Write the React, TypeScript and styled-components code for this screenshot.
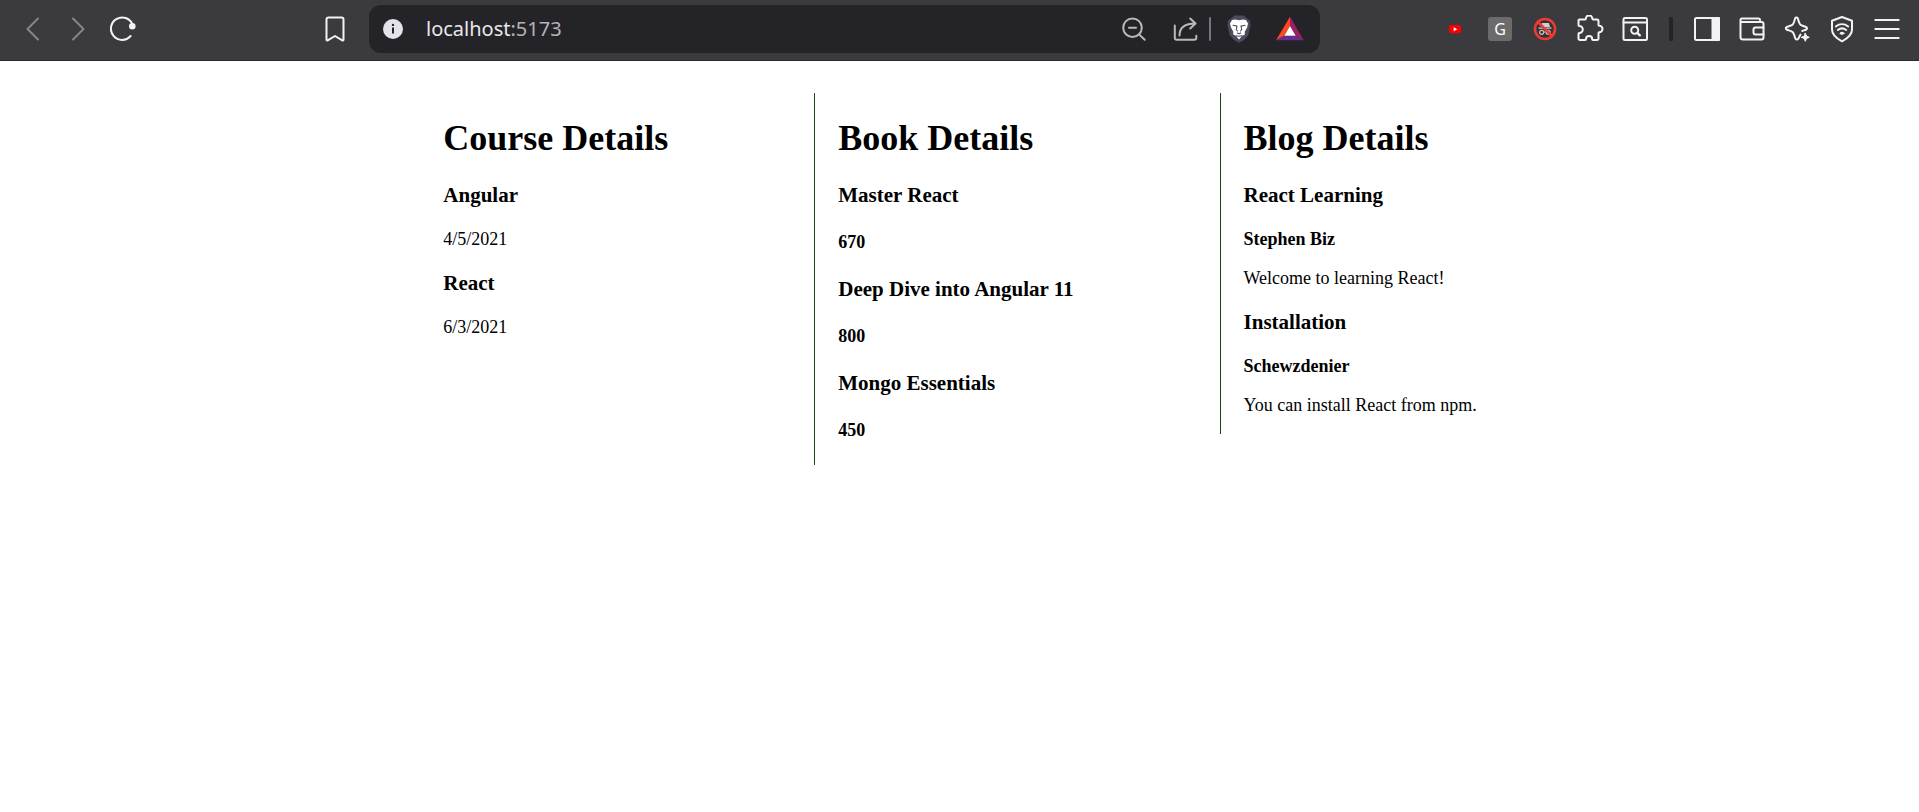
import React from "react";
import styled, { createGlobalStyle } from "styled-components";

const GlobalStyle = createGlobalStyle`
  * { box-sizing: border-box; }
  body {
    margin: 0;
    background: #fff;
    color: #000;
    font-family: "Liberation Serif", "Times New Roman", serif;
    font-size: 18px;
    line-height: 21px;
  }
`;

const Toolbar = styled.header`
  display: flex;
  align-items: center;
  height: 61px;
  padding: 0 18px 3px 20px;
  background: #3b3a3f;
  border-bottom: 1px solid #2b2a2e;
  font-family: "Noto Sans", "Open Sans", sans-serif;
`;

const Group = styled.div<{ $gap: number }>`
  display: flex;
  align-items: center;
  gap: ${(p) => p.$gap}px;
`;

const Spacer = styled.div<{ $grow: number }>`
  flex: ${(p) => p.$grow} 1 0;
`;

const IconButton = styled.button<{ $color?: string }>`
  display: flex;
  align-items: center;
  justify-content: center;
  flex: none;
  width: 28px;
  height: 28px;
  padding: 0;
  border: 0;
  background: none;
  color: ${(p) => p.$color ?? "#f3f2f6"};
`;

const AddressBar = styled.form`
  display: flex;
  align-items: center;
  gap: 19px;
  flex: 0 1 951px;
  min-width: 0;
  height: 48px;
  margin-left: 20px;
  padding: 0 16px 0 10px;
  border-radius: 12px;
  background: #242328;
`;

const Address = styled.label`
  display: grid;
  flex: 1;
  font-size: 20px;
  line-height: 28px;
  color: #e8e7ec;
`;

const AddressInput = styled.input`
  grid-area: 1 / 1;
  width: 100%;
  min-width: 0;
  padding: 0;
  border: 0;
  outline: 0;
  background: none;
  color: transparent;
  font: inherit;
`;

const AddressText = styled.span`
  grid-area: 1 / 1;
  pointer-events: none;
`;

const Port = styled.span`
  color: #b4b3b9;
`;

const Divider = styled.span<{ $width: number; $color: string; $space?: number }>`
  width: ${(p) => p.$width}px;
  height: 24px;
  margin: 0 ${(p) => p.$space ?? 0}px;
  border-radius: 1px;
  background: ${(p) => p.$color};
`;

const LetterBadge = styled.span`
  width: 24px;
  height: 24px;
  border-radius: 3px;
  background: #6b6b6b;
  color: #fff;
  font: 16px/24px "Noto Sans", sans-serif;
  text-align: center;
`;

const Columns = styled.main`
  display: flex;
  flex-wrap: wrap;
  justify-content: center;
  align-items: flex-start;
  column-gap: 146px;
  padding: 32px 16px 32px 17px;
`;

const Column = styled.section<{ $ruled?: boolean }>`
  display: flow-root;
  padding-left: ${(p) => (p.$ruled ? 23 : 0)}px;
  border-left: ${(p) => (p.$ruled ? "1px solid #1c4410" : "0")};
`;

const Title = styled.h1`
  margin: 25px 0 24px;
  font-size: 36px;
  line-height: 41px;
`;

const ItemTitle = styled.h3`
  margin: 21px 0;
  font-size: 21px;
  line-height: 25px;
`;

const Price = styled.h4`
  margin: 24px 0;
  font-size: 18px;
`;

const Text = styled.p<{ $bold?: boolean }>`
  margin: 18px 0;
  font-weight: ${(p) => (p.$bold ? 700 : 400)};
`;

const Icon = ({ children, stroke = 2 }: { children: React.ReactNode; stroke?: number }) => (
  <svg
    width={28}
    height={28}
    viewBox="0 0 28 28"
    fill="none"
    stroke="currentColor"
    strokeWidth={stroke}
    strokeLinecap="round"
    strokeLinejoin="round"
    aria-hidden="true"
  >
    {children}
  </svg>
);

const courses = [
  { id: 1, name: "Angular", date: "4/5/2021" },
  { id: 2, name: "React", date: "6/3/2021" },
];

const books = [
  { id: 1, name: "Master React", price: 670 },
  { id: 2, name: "Deep Dive into Angular 11", price: 800 },
  { id: 3, name: "Mongo Essentials", price: 450 },
];

const blogs = [
  { id: 1, title: "React Learning", author: "Stephen Biz", body: "Welcome to learning React!" },
  { id: 2, title: "Installation", author: "Schewzdenier", body: "You can install React from npm." },
];

const Navigation = () => (
  <Group $gap={17}>
    <IconButton aria-label="Back" $color="#86858a">
      <Icon><path d="M18 3.500 7.500 14 18 24.500" /></Icon>
    </IconButton>
    <IconButton aria-label="Forward" $color="#86858a">
      <Icon><path d="M8 3.500 18.500 14 8 24.500" /></Icon>
    </IconButton>
    <IconButton aria-label="Reload">
      <Icon>
        <path d="M22.500 9.500A11.200 11.200 0 1 0 20.600 21" />
        <circle cx="22.300" cy="11.200" r="2.300" fill="currentColor" />
      </Icon>
    </IconButton>
  </Group>
);

const AddressField = () => (
  <AddressBar>
    <IconButton type="button" aria-label="Site information" $color="#e4e3ea">
      <Icon>
        <circle cx="14" cy="14" r="10" fill="currentColor" stroke="none" />
        <path d="M14 12.500v6" stroke="#242328" strokeLinecap="butt" />
        <circle cx="14" cy="9.900" r="1.200" fill="#242328" stroke="none" />
      </Icon>
    </IconButton>
    <Address>
      <AddressInput aria-label="Address" />
      <AddressText>localhost<Port>:5173</Port></AddressText>
    </Address>
    <Group $gap={23}>
      <IconButton type="button" aria-label="Zoom out" $color="#b9b8bd">
        <Icon><circle cx="12.500" cy="12.700" r="9.300" /><path d="m19.300 19.600 5.400 5.200M9 12.700h7" /></Icon>
      </IconButton>
      <Group $gap={14}>
        <Group $gap={10}>
          <IconButton type="button" aria-label="Share" $color="#b9b8bd">
            <Icon>
              <path d="M3.800 10.500v12.200a2 2 0 0 0 2 2h17.500a2 2 0 0 0 2-2v-2" />
              <path d="M8.500 20.500c0-8 6-12 16-12M19.200 3.500l5.300 5-5.300 5" />
            </Icon>
          </IconButton>
          <Divider $width={2} $color="#77767c" />
        </Group>
        <IconButton type="button" aria-label="Brave Shields">
          <Icon>
            <path
              d="m9.500.5-3 2.500-3.300 2.500L2.500 10l2.300 10.500L9 25l5 2.700 5-2.700 4.200-4.500L25.500 10l-.700-4.500L21.500 3l-3-2.500z"
              fill="#4b4b5b"
              stroke="none"
            />
            <path
              d="m10 4.500 4 .800 4-.800 3 .5 2 3.500-1 4.500-2.200 3.500 0 3-2.800 1.500-3 3.500-3-3.500-2.800-1.500 0-3L6 12.500 5 8.500 7 5z"
              fill="#fff"
              stroke="none"
            />
            <path
              d="m8 10.200 4 .9-.700 3.400 1.200 1.500M20 10.200l-4 .9.700 3.400-1.200 1.500M12.300 18l1.700.8 1.700-.8M11 20.700l3 .5 3-.5"
              stroke="#4b4b5b"
              strokeWidth="1.100"
            />
          </Icon>
        </IconButton>
      </Group>
      <IconButton type="button" aria-label="Brave Rewards">
        <Icon>
          <g stroke="none">
            <path d="M14 1.700 0 25.300l8.300-4.600L14 11z" fill="#ff4724" />
            <path d="m14 1.700 13.700 23.600-8-4.600L14 11z" fill="#9e1f63" />
            <path d="M0 25.300h27.700l-8-4.600H8.300z" fill="#662d91" />
            <path d="m14 11 5.700 9.700H8.300z" fill="#fff" />
          </g>
        </Icon>
      </IconButton>
    </Group>
  </AddressBar>
);

const Extensions = () => (
  <Group $gap={17}>
    <IconButton aria-label="YouTube">
      <Icon>
        <rect x="8" y="10" width="12" height="8.300" rx="2" fill="#f00" stroke="none" />
        <path d="m12.700 12.200 3.600 2-3.600 2z" fill="#fff" stroke="none" />
      </Icon>
    </IconButton>
    <IconButton aria-label="G extension">
      <LetterBadge>G</LetterBadge>
    </IconButton>
    <IconButton aria-label="Incognito blocker">
      <Icon>
        <circle cx="14" cy="14" r="10" fill="#333238" stroke="none" />
        <path d="M11 8h7l1 4h-9zM7.500 12.500h13v1.300h-13z" fill="#d0d0d0" stroke="none" />
        <g stroke="#c4c4c4" strokeWidth="1.200">
          <circle cx="10.700" cy="17.300" r="2" />
          <circle cx="17.200" cy="17.300" r="2" />
          <path d="M12.700 17h2.500" />
        </g>
        <circle cx="14" cy="14" r="10" stroke="#ee3a33" strokeWidth="2.600" />
        <path d="m7 7 14 14" stroke="#ee3a33" strokeWidth="2.600" />
      </Icon>
    </IconButton>
    <IconButton aria-label="Extensions">
      <Icon>
        <path d="M3.500 4.500H9a.800.800 0 0 0 .8-.8 3.300 3.300 0 0 1 6.600 0 .8.8 0 0 0 .8.8h3.800a1.500 1.500 0 0 1 1.500 1.500v4a.8.8 0 0 0 .8.800 3.200 3.200 0 0 1 0 6.400.8.8 0 0 0-.8.8v5.500a1.500 1.500 0 0 1-1.500 1.500h-4a.8.8 0 0 1-.8-.8 3.100 3.100 0 0 0-6.200 0 .8.8 0 0 1-.8.8H4A1.500 1.500 0 0 1 2.500 23.500v-4.700a.8.8 0 0 1 .8-.8 3.500 3.500 0 0 0 0-7 .8.8 0 0 1-.8-.8V5.500a1 1 0 0 1 1-1z" />
      </Icon>
    </IconButton>
    <IconButton aria-label="Search tabs">
      <Icon>
        <rect x="2.500" y="3" width="23.500" height="22" rx="1.500" />
        <path d="M2.500 7.500H26" />
        <circle cx="13.700" cy="15.300" r="3.500" />
        <path d="m16.500 18 2.300 2.300" strokeWidth="2.400" />
      </Icon>
    </IconButton>
    <Divider $width={4} $color="#242328" $space={3} />
    <IconButton aria-label="Sidebar">
      <Icon>
        <rect x="2" y="3" width="24" height="22" rx="1.500" />
        <path d="M19.500 3H26v22h-6.500z" fill="currentColor" />
      </Icon>
    </IconButton>
    <IconButton aria-label="Wallet">
      <Icon>
        <path d="M22 6.500V5a1.500 1.500 0 0 0-1.500-1.500H4A1.500 1.500 0 0 0 2.500 5v17A2.500 2.500 0 0 0 5 24.500h18.500A2 2 0 0 0 25.500 22.500V9A2 2 0 0 0 23.500 7H4a1.500 1.500 0 0 1-1.500-1.500" />
        <path d="M25.500 12.500h-8a2 2 0 0 0-2 2v3a2 2 0 0 0 2 2h8" />
      </Icon>
    </IconButton>
    <IconButton aria-label="Leo AI">
      <Icon>
        <path d="M17.500 19.500C16.500 21 16.300 22.500 15 24a1.600 1.600 0 0 1-2.600-.4c-1-2-1-4.700-2.600-6.400C8.100 15.500 5.500 15.500 3.500 14.500a1.400 1.400 0 0 1 0-2.400c2-1 4.600-1.100 6.300-2.700 1.600-1.700 1.600-4.300 2.400-6.200a1.400 1.400 0 0 1 2.500 0c.9 1.900.9 4.500 2.500 6.200 1.700 1.600 4.200 1.700 6.100 2.700a1.400 1.400 0 0 1 0 2.400c-1.500.8-2.800.9-4 1.500" />
        <path d="m22.300 18.300 1.200 2.800 2.800 1.200-2.800 1.200-1.200 2.800-1.200-2.800-2.800-1.200 2.800-1.200z" fill="currentColor" strokeWidth="1" />
      </Icon>
    </IconButton>
    <IconButton aria-label="VPN">
      <Icon>
        <path d="m14 2 10 3.700v8.800c0 5-4.500 9-10 11.800-5.500-2.800-10-6.800-10-11.800V5.700z" />
        <path d="M7.800 11.500c3.700-2.900 8.700-2.900 12.400 0M9.800 15c2.600-2 5.800-2 8.400 0" />
        <ellipse cx="14" cy="18.300" rx="2" ry="1" fill="currentColor" strokeWidth="1" />
      </Icon>
    </IconButton>
    <IconButton aria-label="Menu">
      <Icon><path d="M2.300 5h23.400M2.300 14h23.400M2.300 23h23.400" /></Icon>
    </IconButton>
  </Group>
);

const BrowserBar = () => (
  <Toolbar>
    <Navigation />
    <Spacer $grow={183} />
    <IconButton aria-label="Bookmark">
      <Icon><path d="M5.500 4.500a2 2 0 0 1 2-2h13a2 2 0 0 1 2 2v20.300a.8.800 0 0 1-1.200.600L14 21l-7.300 4.400a.8.800 0 0 1-1.200-.600z" /></Icon>
    </IconButton>
    <AddressField />
    <Spacer $grow={121} />
    <Extensions />
  </Toolbar>
);

export default function App() {
  return (
    <>
      <GlobalStyle />
      <BrowserBar />
      <Columns>
        <Column>
          <Title>Course Details</Title>
          {courses.map((course) => (
            <React.Fragment key={course.id}>
              <ItemTitle>{course.name}</ItemTitle>
              <Text>{course.date}</Text>
            </React.Fragment>
          ))}
        </Column>
        <Column $ruled>
          <Title>Book Details</Title>
          {books.map((book) => (
            <React.Fragment key={book.id}>
              <ItemTitle>{book.name}</ItemTitle>
              <Price>{book.price}</Price>
            </React.Fragment>
          ))}
        </Column>
        <Column $ruled>
          <Title>Blog Details</Title>
          {blogs.map((blog) => (
            <React.Fragment key={blog.id}>
              <ItemTitle>{blog.title}</ItemTitle>
              <Text $bold>{blog.author}</Text>
              <Text>{blog.body}</Text>
            </React.Fragment>
          ))}
        </Column>
      </Columns>
    </>
  );
}
